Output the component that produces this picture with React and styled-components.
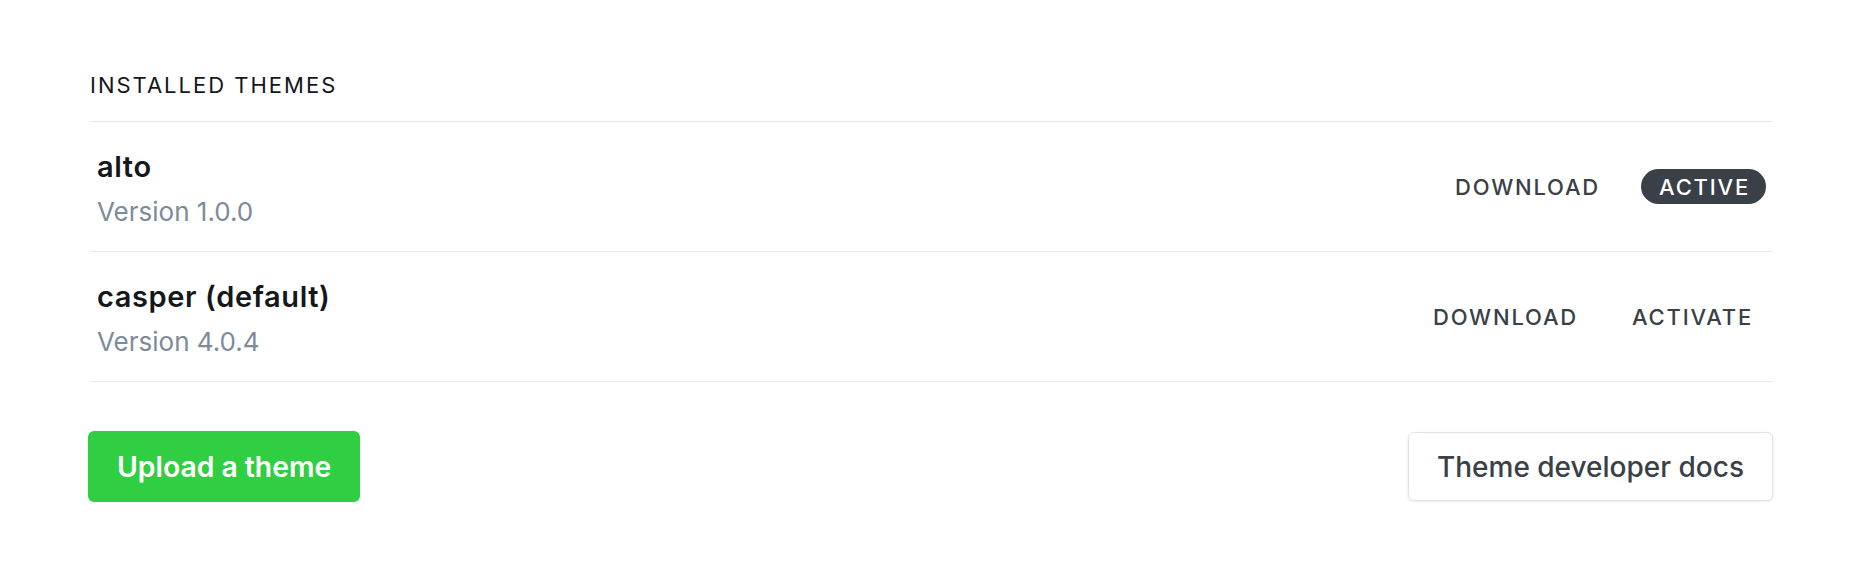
import styled, { createGlobalStyle } from "styled-components";

const GlobalStyle = createGlobalStyle`
  html, body {
    margin: 0;
    padding: 0;
    background: #fff;
  }
  body {
    font-family: Inter, "Noto Sans", sans-serif;
    -webkit-font-smoothing: antialiased;
  }
`;

const themes = [
  { name: "alto", version: "1.0.0", active: true },
  { name: "casper (default)", version: "4.0.4", active: false },
];

export default function App() {
  return (
    <>
      <GlobalStyle />
      <Page>
        <Heading>Installed themes</Heading>
        <ThemeList>
          {themes.map((t) => (
            <ThemeRow key={t.name}>
              <ThemeInfo>
                <ThemeName>{t.name}</ThemeName>
                <ThemeVersion>Version {t.version}</ThemeVersion>
              </ThemeInfo>
              <Actions>
                <LinkButton>Download</LinkButton>
                {t.active ? (
                  <ActivePill>Active</ActivePill>
                ) : (
                  <LinkButton>Activate</LinkButton>
                )}
              </Actions>
            </ThemeRow>
          ))}
        </ThemeList>
        <Footer>
          <UploadButton>Upload a theme</UploadButton>
          <DocsButton>Theme developer docs</DocsButton>
        </Footer>
      </Page>
    </>
  );
}

const Page = styled.main`
  width: 1683px;
  padding: 70px 0 0 90px;
`;

const Heading = styled.h4`
  margin: 0 0 21px;
  font-size: 22px;
  line-height: 30px;
  font-weight: 400;
  letter-spacing: 2px;
  text-transform: uppercase;
  color: #15171a;
`;

const ThemeList = styled.div`
  border-top: 1px solid #e6e9ec;
`;

const ThemeRow = styled.div`
  display: flex;
  align-items: center;
  justify-content: space-between;
  height: 129px;
  border-bottom: 1px solid #e6e9ec;
`;

const ThemeInfo = styled.div`
  display: flex;
  flex-direction: column;
  gap: 10px;
  padding: 4px 0 0 7px;
`;

const ThemeName = styled.h3`
  margin: 0;
  font-size: 29px;
  line-height: 36px;
  font-weight: 600;
  letter-spacing: 0.6px;
  color: #15171a;
`;

const ThemeVersion = styled.span`
  font-size: 26px;
  line-height: 34px;
  color: #7c8b9a;
`;

const Actions = styled.div`
  display: flex;
  align-items: center;
  gap: 28px;
  padding-right: 7px;
`;

const LinkButton = styled.button`
  border: 0;
  background: none;
  padding: 0 13px;
  height: 35px;
  font-family: inherit;
  font-size: 22px;
  font-weight: 500;
  letter-spacing: 1.8px;
  text-transform: uppercase;
  color: #394047;
  cursor: pointer;
`;

const ActivePill = styled.span`
  display: inline-flex;
  align-items: center;
  height: 35px;
  padding: 0 16px 0 18px;
  border-radius: 18px;
  background: #394047;
  color: #fff;
  font-size: 22px;
  font-weight: 500;
  letter-spacing: 1.8px;
  text-transform: uppercase;
`;

const Footer = styled.div`
  display: flex;
  justify-content: space-between;
  align-items: center;
  margin-top: 49px;
  margin-left: -2px;
`;

const UploadButton = styled.button`
  height: 71px;
  padding: 0 29px;
  border: 0;
  border-radius: 6px;
  background: #30cf43;
  color: #fff;
  font-family: inherit;
  font-size: 28.3px;
  font-weight: 600;
  cursor: pointer;
`;

const DocsButton = styled.button`
  height: 69px;
  padding: 0 28px;
  border: 1px solid #dde3e8;
  border-radius: 6px;
  background: #fff;
  box-shadow: 0 2px 4px rgba(0, 0, 0, 0.08);
  color: #394047;
  font-family: inherit;
  font-size: 28px;
  font-weight: 500;
  cursor: pointer;
`;
